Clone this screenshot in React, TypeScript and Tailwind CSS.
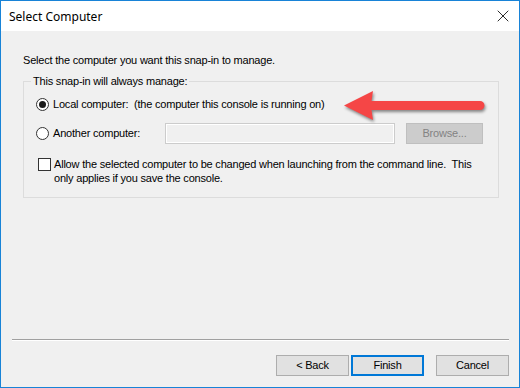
import { X } from 'lucide-react'

function Radio({ checked }: { checked?: boolean }) {
  return (
    <span className="flex h-[13px] w-[13px] shrink-0 items-center justify-center rounded-full border border-[#333333] bg-white">
      {checked && <span className="h-[7px] w-[7px] rounded-full bg-[#1a1a1a]" />}
    </span>
  )
}

function Button({ label, primary }: { label: string; primary?: boolean }) {
  return (
    <button
      type="button"
      className={
        primary
          ? 'flex h-[21px] w-[73px] items-center justify-center border-2 border-[#0078d7] bg-[#e1e1e1] text-black'
          : 'flex h-[21px] w-[73px] items-center justify-center border border-[#adadad] bg-[#e1e1e1] text-black'
      }
    >
      {label}
    </button>
  )
}

function ArrowMark() {
  return (
    <svg
      className="pointer-events-none absolute left-[338px] top-[86px] drop-shadow-[1px_2px_1.5px_rgba(0,0,0,0.45)]"
      width="156"
      height="40"
      viewBox="0 0 156 40"
    >
      <path
        d="M5 18.5 L34 4 L32.5 14 L141 14 A4.5 4.5 0 0 1 141 23 L32.5 23 L34 33 Z"
        fill="#f54646"
      />
    </svg>
  )
}

export default function App() {
  return (
    <div className="relative flex h-[388px] w-[520px] flex-col border border-[#1883d7] font-['Liberation_Sans',Arial,sans-serif] text-[11px] leading-[13px] tracking-[-0.2px] text-black">
      <div className="flex h-[30px] shrink-0 items-center justify-between bg-white pl-[8px] pr-[6px] tracking-normal">
        <span className="font-['Noto_Sans','Open_Sans',sans-serif] text-[12px] text-black">Select Computer</span>
        <X className="h-[20px] w-[20px] text-black" strokeWidth={1} />
      </div>

      <div className="flex flex-1 flex-col bg-[#f0f0f0]">
        <p className="ml-[22px] mt-[23px]">Select the computer you want this snap-in to manage.</p>

        <fieldset className="ml-[22px] mt-[8px] w-[476px] border border-[#dcdcdc] pb-[12px]">
          <legend className="ml-[7px] px-[2px]">This snap-in will always manage:</legend>

          <div className="ml-[12px] mt-[10px] flex h-[13px] items-center gap-[4px]">
            <Radio checked />
            <span className="whitespace-pre">Local computer:  (the computer this console is running on)</span>
          </div>

          <div className="ml-[12px] mt-[12px] flex h-[21px] items-center">
            <Radio />
            <span className="ml-[4px] w-[112px]">Another computer:</span>
            <div className="h-[21px] w-[230px] border border-[#cccccc] bg-[#f0f0f0] shadow-[inset_0_0_0_1px_#ffffff]" />
            <div className="ml-[11px] flex h-[21px] w-[77px] items-center justify-center border border-[#bfbfbf] bg-[#cccccc] text-[#838383]">
              Browse...
            </div>
          </div>

          <div className="ml-[14px] mt-[13px] flex items-start gap-[3px] leading-[14px]">
            <span className="mt-[1px] h-[13px] w-[13px] shrink-0 border border-[#333333] bg-white" />
            <span className="whitespace-pre">
              Allow the selected computer to be changed when launching from the command line.  This
              <br />
              only applies if you save the console.
            </span>
          </div>
        </fieldset>

        <div className="mb-[14px] ml-[11px] mr-[10px] mt-auto h-[2px] border-t border-[#a0a0a0] bg-white" />

        <div className="mb-[11px] flex justify-end pr-[10px]">
          <Button label="< Back" />
          <div className="ml-[2px]">
            <Button label="Finish" primary />
          </div>
          <div className="ml-[12px]">
            <Button label="Cancel" />
          </div>
        </div>
      </div>

      <ArrowMark />
    </div>
  )
}
